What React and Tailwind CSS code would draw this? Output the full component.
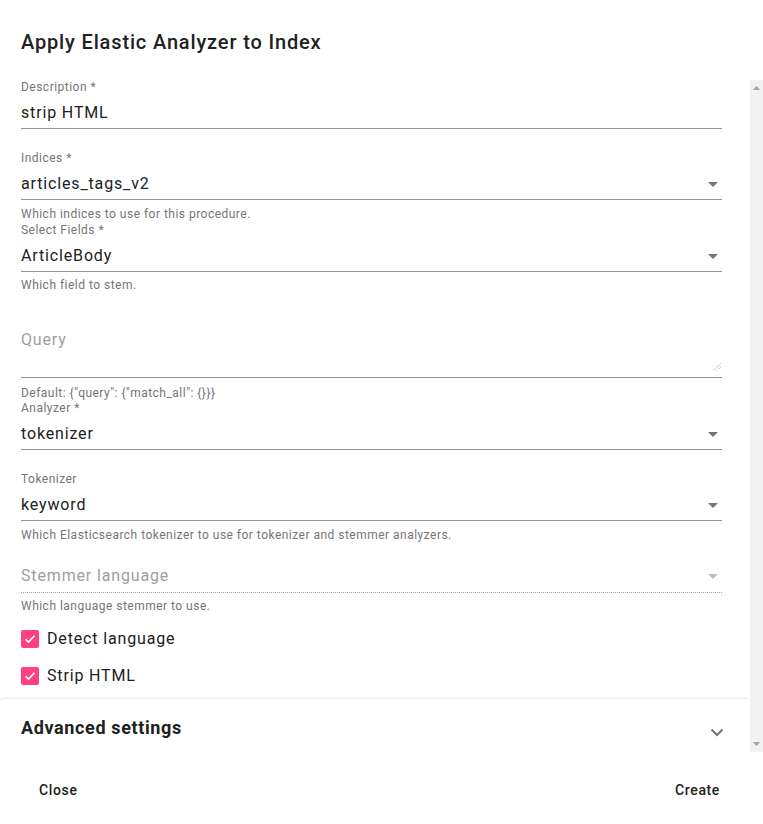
import React from "react";

const Arrow = ({ light }) => (
  <svg width="10" height="5" viewBox="0 0 10 5" className="mr-[4px] shrink-0">
    <path d="M0 0L5 5L10 0Z" fill={light ? "#bdbdbd" : "#757575"} />
  </svg>
);

const Label = ({ children, className = "" }) => (
  <div className={`text-[12px] leading-[14px] tracking-[0.04em] text-[#757575] ${className}`}>{children}</div>
);

const Helper = ({ children, className = "" }) => (
  <div className={`text-[12px] leading-[14px] tracking-[0.04em] text-[#757575] ${className}`}>{children}</div>
);

const Value = ({ children, select, className = "" }) => (
  <div className={`flex items-center justify-between pt-[9px] pb-[5px] border-b border-[#949494] ${className}`}>
    <span className="text-[16px] leading-[20px] text-[#212121]">{children}</span>
    {select && <Arrow />}
  </div>
);

const Check = ({ children, className = "" }) => (
  <div className={`flex items-center h-[18px] ${className}`}>
    <div className="w-[18px] h-[18px] rounded-[2px] bg-[#ff4081] flex items-center justify-center">
      <svg width="12" height="10" viewBox="0 0 12 10">
        <path d="M1.5 5.2L4.4 8L10.5 1.8" stroke="white" strokeWidth="1.6" fill="none" />
      </svg>
    </div>
    <span className="ml-[8px] text-[16px] leading-[20px] text-[#212121]">{children}</span>
  </div>
);

export default function App() {
  return (
    <div className="w-[763px] h-[824px] bg-white overflow-hidden font-['Roboto',sans-serif] tracking-[0.053em] flex flex-col">
      <div className="h-[80px] pt-[30px] pl-[21px] shrink-0">
        <h2 className="text-[20px] leading-[24px] font-medium text-[#212121]">
          Apply Elastic Analyzer to Index
        </h2>
      </div>
      <div className="flex h-[672px] shrink-0">
        <div className="w-[750px] h-full overflow-hidden flex flex-col">
          <div className="pl-[21px] pr-[28px]">
            <Label>Description *</Label>
            <Value>strip HTML</Value>

            <Label className="mt-[22px]">Indices *</Label>
            <Value select>articles_tags_v2</Value>
            <Helper className="mt-[7px]">Which indices to use for this procedure.</Helper>

            <Label className="mt-[2px]">Select Fields *</Label>
            <Value select>ArticleBody</Value>
            <Helper className="mt-[6px]">Which field to stem.</Helper>

            <div className="mt-[38px] h-[48px] flex justify-between border-b border-[#949494]">
              <span className="text-[16px] leading-[20px] text-[#9e9e9e]">Query</span>
              <svg width="8" height="8" viewBox="0 0 8 8" className="self-end mb-[6px] mr-[1px]">
                <path d="M7.5 0.5L0.5 7.5M7.5 4L4 7.5" stroke="#8a8a8a" strokeWidth="0.9" strokeDasharray="1 1" />
              </svg>
            </div>
            <Helper className="mt-[8px]">Default: {'{"query": {"match_all": {}}}'}</Helper>

            <Label className="mt-[1px]">Analyzer *</Label>
            <Value select>tokenizer</Value>

            <Label className="mt-[22px]">Tokenizer</Label>
            <Value select>keyword</Value>
            <Helper className="mt-[7px]">
              Which Elasticsearch tokenizer to use for tokenizer and stemmer analyzers.
            </Helper>

            <div className="mt-[24px] flex items-center justify-between pb-[6px] border-b border-dotted border-[#9e9e9e]">
              <span className="text-[16px] leading-[20px] text-[#9e9e9e]">Stemmer language</span>
              <Arrow light />
            </div>
            <Helper className="mt-[6px]">Which language stemmer to use.</Helper>

            <Check className="mt-[17px]">Detect language</Check>
            <Check className="mt-[19px]">Strip HTML</Check>
          </div>

          <div className="mt-[13px] h-[64px] shrink-0 rounded-t-[4px] border-t border-[#ededed] shadow-[0_-1px_2px_rgba(0,0,0,0.04)] pl-[21px] pr-[26px] flex items-center justify-between">
            <span className="text-[18px] leading-[24px] font-bold tracking-[0.035em] text-[#212121] relative top-[-3px]">
              Advanced settings
            </span>
            <svg width="14" height="9" viewBox="0 0 14 9" className="mt-[4px]">
              <path d="M1.5 1.5L7 7L12.5 1.5" stroke="#757575" strokeWidth="2" fill="none" />
            </svg>
          </div>
        </div>
        <div className="w-[13px] h-full bg-[#f1f1f1] flex flex-col items-center justify-between py-[6px]">
          <svg width="7" height="4" viewBox="0 0 7 4">
            <path d="M0 4L3.5 0L7 4Z" fill="#a3a3a3" />
          </svg>
          <svg width="7" height="4" viewBox="0 0 7 4">
            <path d="M0 0L3.5 4L7 0Z" fill="#a3a3a3" />
          </svg>
        </div>
      </div>
      <div className="flex justify-between items-center pl-[23px] pr-[27px] pt-[26px]">
        <button className="px-4 h-[24px] text-[14px] leading-[24px] font-medium tracking-[0.045em] text-[#212121]">Close</button>
        <button className="px-4 h-[24px] text-[14px] leading-[24px] font-medium tracking-[0.045em] text-[#212121]">Create</button>
      </div>
    </div>
  );
}
